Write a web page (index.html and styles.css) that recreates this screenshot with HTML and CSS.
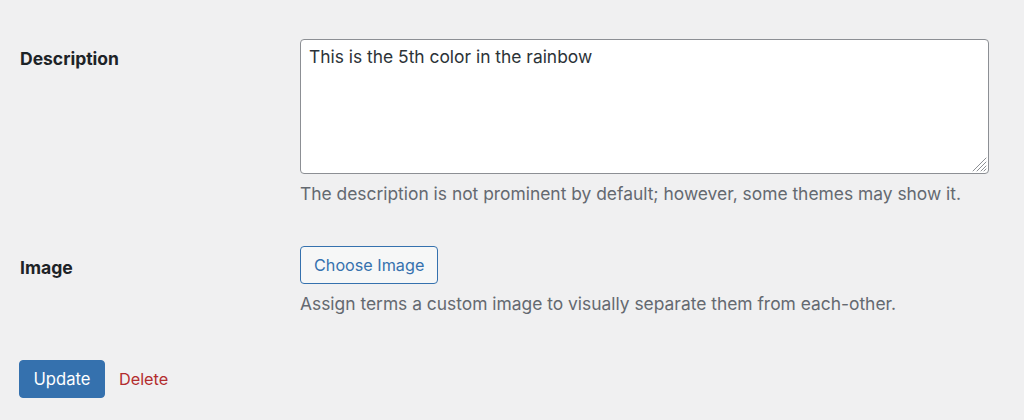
FILE: index.html
```html
<!DOCTYPE html>
<html lang="en">
<head>
<meta charset="utf-8">
<title>Edit term</title>
<link rel="stylesheet" href="styles.css">
</head>
<body>
<div class="wrap">
  <div class="form-table">
    <div class="row row-desc">
      <label class="th" for="desc">Description</label>
      <div class="td">
        <div class="textarea-wrap">
          <textarea id="desc" class="field">This is the 5th color in the rainbow</textarea>
          <svg class="grip" width="16" height="16" viewBox="0 0 16 16" aria-hidden="true">
            <g stroke="#8c8f94" stroke-width="1" stroke-linecap="round">
              <line x1="15" y1="2" x2="2" y2="15"/>
              <line x1="15" y1="6" x2="6" y2="15"/>
              <line x1="15" y1="10" x2="10" y2="15"/>
              <line x1="15" y1="13" x2="13" y2="15"/>
            </g>
          </svg>
        </div>
        <p class="description">The description is not prominent by default; however, some themes may show it.</p>
      </div>
    </div>
    <div class="row row-image">
      <div class="th">Image</div>
      <div class="td">
        <button class="button secondary" type="button">Choose Image</button>
        <p class="description">Assign terms a custom image to visually separate them from each-other.</p>
      </div>
    </div>
  </div>
  <div class="submit">
    <button class="button primary" type="button">Update</button>
    <a class="delete" href="#">Delete</a>
  </div>
</div>
</body>
</html>
```
FILE: styles.css
```css
html, body {
  margin: 0;
  padding: 0;
  background: #f0f0f1;
}
body {
  font-family: Inter, "Liberation Sans", Arial, sans-serif;
  color: #1d2327;
}
.wrap {
  padding: 39px 0 0 20px;
}
.form-table {
  display: flex;
  flex-direction: column;
  gap: 40px;
}
.row {
  display: grid;
  grid-template-columns: 280px 689px;
  align-items: start;
}
.th {
  font-weight: 700;
  font-size: 17.5px;
  line-height: 25px;
  color: #1d2327;
}
.row-desc .th {
  margin-top: 7px;
}
.row-image .th {
  margin-top: 9px;
  font-size: 17.6px;
}
.textarea-wrap {
  position: relative;
  height: 135px;
}
.field {
  display: block;
  box-sizing: border-box;
  width: 689px;
  height: 135px;
  margin: 0;
  padding: 4px 8px;
  border: 1px solid #8c8f94;
  border-radius: 4px;
  background: #fff;
  color: #2c3338;
  font-family: Inter, "Liberation Sans", Arial, sans-serif;
  font-size: 17.4px;
  line-height: 25px;
  resize: none;
  outline: none;
}
.grip {
  position: absolute;
  right: 2px;
  bottom: 2px;
}
.description {
  margin: 7px 0 0;
  font-size: 17.4px;
  line-height: 25px;
  color: #646970;
}
.button {
  box-sizing: border-box;
  height: 38px;
  margin: 0;
  padding: 0 13px;
  border-radius: 4px;
  font-family: Inter, "Liberation Sans", Arial, sans-serif;
  line-height: 36px;
  cursor: pointer;
}
.secondary {
  display: block;
  border: 1px solid #3571ae;
  background: #f6f7f7;
  color: #3571ae;
  font-size: 16.2px;
}
.row-image .description {
  margin-top: 7px;
}
.submit {
  display: flex;
  align-items: center;
  gap: 14px;
  margin-top: 44px;
  margin-left: -1px;
}
.primary {
  border: 1px solid #3571ae;
  background: #3571ae;
  color: #fff;
  font-size: 16.6px;
  padding: 0 13.5px;
}
.delete {
  color: #b32d2e;
  font-size: 16.3px;
  text-decoration: none;
}
```
